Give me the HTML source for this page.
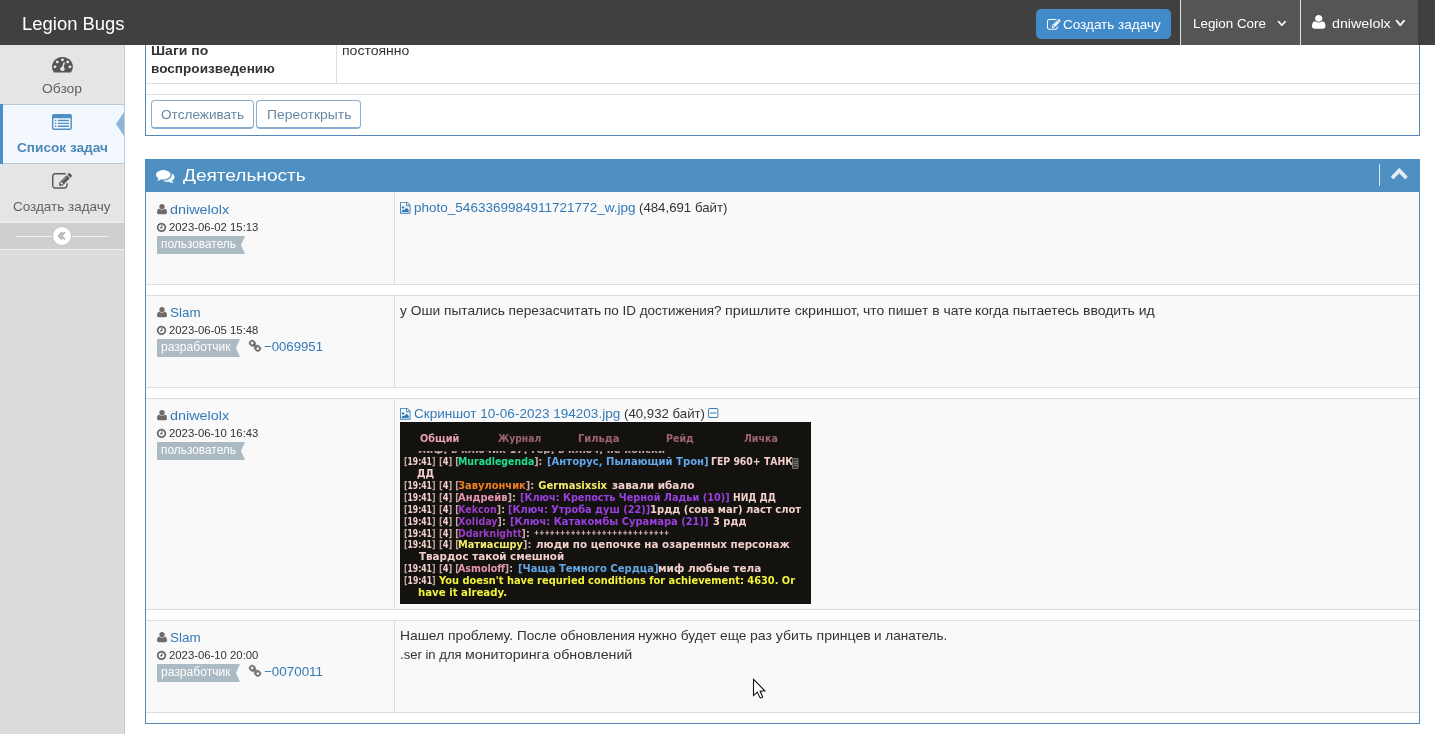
<!DOCTYPE html>
<html lang="ru">
<head>
<meta charset="utf-8">
<title>Legion Bugs</title>
<style>
*{box-sizing:border-box;margin:0;padding:0}
html,body{width:1435px;height:734px;overflow:hidden;background:#fff}
body{font-family:"Liberation Sans",sans-serif;font-size:13px;color:#393939;position:relative}
.abs{position:absolute}
.t{position:absolute;white-space:nowrap;line-height:1;z-index:5;transform-origin:0 0}
.t.c{font-family:"DejaVu Sans","Liberation Sans",sans-serif;z-index:7}
svg{position:absolute;overflow:visible;z-index:6}
/* navbar */
#nav{position:absolute;left:0;top:0;width:1435px;height:45px;background:#404040;z-index:4}
#nav .sec{position:absolute;top:0;height:45px;background:#555;border-left:1px solid #e1e1e1}
/* sidebar */
#side{position:absolute;left:0;top:45px;width:125px;height:689px;background:#dcdcdc;border-right:1px solid #c3ccd4}
.sline{position:absolute;left:0;width:124px;height:1px}
/* widgets */
.wbox{position:absolute;left:145px;width:1275px;border:1px solid #5588b8;background:#fff}
.hdr{position:absolute;left:145px;top:159px;width:1275px;height:33px;background:#4f90c2}
.row{position:absolute;left:146px;width:1273px;background:#f9f9f9;border-top:1px solid #ddd;border-bottom:1px solid #ddd}
.row .sep{position:absolute;left:248px;top:0;bottom:0;width:1px;background:#ddd}
.btn{position:absolute;height:29px;top:100px;border:1px solid #8aafce;border-bottom-width:2px;border-radius:4px;background:#fff}
.lab{position:absolute;height:18px;background:#abbac3}
.lab:after{content:"";position:absolute;right:-4px;top:0;border-style:solid;border-width:9px 4px 9px 0;border-color:#abbac3 transparent #abbac3 transparent;width:0;height:0}
#tx{position:absolute;left:0;top:0;width:1435px;height:734px;z-index:7;will-change:transform}
#shot{position:absolute;left:400px;top:422px;width:411px;height:182px;background:#13120f;z-index:6}
</style>
</head>
<body>
<!-- NAVBAR -->
<div id="nav">
  <div class="abs" style="left:1036px;top:9px;width:135px;height:30px;background:#428bca;border-radius:5px"></div>
  <div class="sec" style="left:1180px;width:120px"></div>
  <div class="sec" style="left:1300px;width:118px"></div>
</div>

<!-- SIDEBAR -->
<div id="side">
  <div class="abs" style="left:0;top:0;width:124px;height:177px;background:#e5e5e5"></div>
  <div class="sline" style="top:59px;background:#c3cfda"></div>
  <div class="abs" style="left:0;top:59px;width:124px;height:60px;background:#f2f8fd;border-top:1px solid #b5c9db;border-bottom:1px solid #b5c9db"></div>
  <div class="abs" style="left:0;top:59px;width:3px;height:60px;background:#4b8fc8"></div>
  <div class="abs" style="left:116px;top:67px;width:0;height:0;border-style:solid;border-width:12px 8px 12px 0;border-color:transparent #8fb4d4 transparent transparent"></div>
  <div class="abs" style="left:0;top:177px;width:124px;height:28px;background:#cfcfcf;border-top:1px solid #f0f0f0;border-bottom:1px solid #f0f0f0"></div>
  <div class="abs" style="left:15px;top:191px;width:94px;height:1px;background:#ececec"></div>
  <div class="abs" style="left:52px;top:181px;width:20px;height:20px;border-radius:50%;background:#fff;border:1px solid #c0c0c0"></div>
</div>

<!-- TOP WIDGET (cut) -->
<div class="wbox" style="top:30px;height:106px"></div>
<div class="abs" style="left:146px;top:83px;width:1273px;height:1px;background:#ddd"></div>
<div class="abs" style="left:146px;top:94px;width:1273px;height:1px;background:#ddd"></div>
<div class="abs" style="left:336px;top:45px;width:1px;height:38px;background:#ddd"></div>
<div class="btn" style="left:151px;width:103px"></div>
<div class="btn" style="left:256px;width:105px"></div>

<!-- ACTIVITY WIDGET -->
<div class="wbox" style="top:159px;height:565px"></div>
<div class="hdr"></div>
<div class="abs" style="left:1379px;top:164px;width:1px;height:22px;background:#d9e6f1"></div>

<div class="row" style="top:192px;height:93px;border-top:0"><div class="sep"></div></div>
<div class="row" style="top:295px;height:93px"><div class="sep"></div></div>
<div class="row" style="top:398px;height:212px"><div class="sep"></div></div>
<div class="row" style="top:620px;height:93px"><div class="sep"></div></div>

<div class="lab" style="left:157px;top:236px;width:84px"></div>
<div class="lab" style="left:157px;top:339px;width:78.5px"></div>
<div class="lab" style="left:157px;top:442px;width:84px"></div>
<div class="lab" style="left:157px;top:664px;width:78.5px"></div>

<div id="shot"></div>
<svg style="left:791px;top:458px;z-index:8" width="8" height="11" viewBox="0 0 8 11"><path d="M1.5 0.5h5.500v10h-5.500z M2.500 3.500h4 M2.500 5.500h4 M2.500 7.500h4" fill="#3a3936" stroke="#77736e" stroke-width="1"/></svg>
<svg style="left:750px;top:676px;z-index:9" width="20" height="26" viewBox="750 676 20 26"><path d="M753.500 679.300V695.600L757.300 692.100L759.900 697.500Q760.900 698.200 762 697.500L762.600 696.700L760.100 691.300L764.900 690.900Z" fill="#fff" stroke="#111" stroke-width="1.100" stroke-linejoin="miter"/></svg>
<svg style="left:51.6px;top:56.8px" width="20.9" height="15.4" viewBox="0.0 256.0 1792.0 1408.0" preserveAspectRatio="none"><path fill="#555" d="M384 1152q0-53-37.500-90.500t-90.500-37.500-90.500 37.500-37.500 90.500 37.500 90.500 90.500 37.500 90.500-37.500 37.500-90.500zm192-448q0-53-37.500-90.500t-90.500-37.500-90.500 37.500-37.500 90.500 37.500 90.500 90.500 37.500 90.500-37.500 37.500-90.500zm428 481l101-382q6-26-7.500-48.500t-38.500-29.500-48 6.500-30 39.500l-101 382q-60 5-107 43.500t-63 98.500q-20 77 20 146t117 89 146-20 89-117q16-60-6-117t-72-91zm660-33q0-53-37.500-90.500t-90.500-37.500-90.500 37.500-37.500 90.500 37.500 90.500 90.500 37.500 90.500-37.500 37.500-90.500zm-640-640q0-53-37.500-90.500t-90.500-37.500-90.500 37.500-37.500 90.500 37.500 90.500 90.500 37.500 90.500-37.500 37.500-90.500zm448 192q0-53-37.500-90.500t-90.500-37.500-90.500 37.500-37.500 90.500 37.500 90.500 90.500 37.500 90.500-37.500 37.500-90.500zm320 448q0 261-141 483-19 29-54 29h-1402q-35 0-54-29-141-221-141-483 0-182 71-348t191-286 286-191 348-71 348 71 286 191 191 286 71 348z"/></svg>
<svg style="left:52.1px;top:114.0px" width="19.9" height="15.9" viewBox="0.0 128.0 1792.0 1408.0" preserveAspectRatio="none"><path fill="#4f8fc5" d="M384 1184v64q0 13-9.500 22.500t-22.500 9.500h-64q-13 0-22.500-9.500t-9.500-22.500v-64q0-13 9.500-22.500t22.500-9.500h64q13 0 22.500 9.500t9.500 22.500zm0-256v64q0 13-9.500 22.500t-22.500 9.500h-64q-13 0-22.500-9.500t-9.500-22.500v-64q0-13 9.500-22.500t22.500-9.500h64q13 0 22.500 9.500t9.500 22.500zm0-256v64q0 13-9.500 22.500t-22.500 9.500h-64q-13 0-22.500-9.500t-9.500-22.500v-64q0-13 9.500-22.500t22.500-9.500h64q13 0 22.500 9.500t9.500 22.500zm1152 512v64q0 13-9.500 22.500t-22.500 9.500h-960q-13 0-22.500-9.500t-9.500-22.500v-64q0-13 9.500-22.500t22.500-9.500h960q13 0 22.500 9.500t9.500 22.500zm0-256v64q0 13-9.500 22.500t-22.500 9.500h-960q-13 0-22.500-9.500t-9.500-22.500v-64q0-13 9.500-22.500t22.500-9.500h960q13 0 22.500 9.500t9.500 22.500zm0-256v64q0 13-9.500 22.500t-22.500 9.500h-960q-13 0-22.500-9.500t-9.500-22.500v-64q0-13 9.500-22.500t22.500-9.500h960q13 0 22.500 9.500t9.500 22.500zm128 704v-832q0-13-9.500-22.500t-22.500-9.500h-1472q-13 0-22.500 9.500t-9.500 22.500v832q0 13 9.500 22.500t22.500 9.500h1472q13 0 22.500-9.500t9.500-22.500zm128-1088v1088q0 66-47 113t-113 47h-1472q-66 0-113-47t-47-113v-1088q0-66 47-113t113-47h1472q66 0 113 47t47 113z"/></svg>
<svg style="left:52.0px;top:173.0px" width="19.9" height="15.7" viewBox="0.0 128.0 1784.0 1408.0" preserveAspectRatio="none"><path fill="#555" d="M888 1184l116-116-152-152-116 116v56h96v96h56zm440-720q-16-16-33 1l-350 350q-17 17-1 33t33-1l350-350q17-17 1-33zm80 594v190q0 119-84.500 203.500t-203.500 84.500h-832q-119 0-203.500-84.500t-84.500-203.500v-832q0-119 84.500-203.500t203.500-84.500h832q63 0 117 25 15 7 18 23 3 17-9 29l-49 49q-14 14-32 8-23-6-45-6h-832q-66 0-113 47t-47 113v832q0 66 47 113t113 47h832q66 0 113-47t47-113v-126q0-13 9-22l64-64q15-15 35-7t20 29zm-96-738l288 288-672 672h-288v-288zm444 132l-92 92-288-288 92-92q28-28 68-28t68 28l152 152q28 28 28 68t-28 68z"/></svg>
<svg style="left:58.3px;top:232.3px" width="7.0" height="7.7" viewBox="429.0 461.0 966.0 998.0" preserveAspectRatio="none"><path fill="#9a9a9a" stroke="#9a9a9a" stroke-width="50" stroke-linejoin="round" d="M1011 1376q0 13-10 23l-50 50q-10 10-23 10t-23-10l-466-466q-10-10-10-23t10-23l466-466q10-10 23-10t23 10l50 50q10 10 10 23t-10 23l-393 393 393 393q10 10 10 23zm384 0q0 13-10 23l-50 50q-10 10-23 10t-23-10l-466-466q-10-10-10-23t10-23l466-466q10-10 23-10t23 10l50 50q10 10 10 23t-10 23l-393 393 393 393q10 10 10 23z"/></svg>
<svg style="left:1046.7px;top:18.6px" width="13.6" height="10.7" viewBox="0.0 128.0 1784.0 1408.0" preserveAspectRatio="none"><path fill="#fff" d="M888 1184l116-116-152-152-116 116v56h96v96h56zm440-720q-16-16-33 1l-350 350q-17 17-1 33t33-1l350-350q17-17 1-33zm80 594v190q0 119-84.500 203.500t-203.500 84.500h-832q-119 0-203.500-84.500t-84.500-203.500v-832q0-119 84.500-203.500t203.500-84.500h832q63 0 117 25 15 7 18 23 3 17-9 29l-49 49q-14 14-32 8-23-6-45-6h-832q-66 0-113 47t-47 113v832q0 66 47 113t113 47h832q66 0 113-47t47-113v-126q0-13 9-22l64-64q15-15 35-7t20 29zm-96-738l288 288-672 672h-288v-288zm444 132l-92 92-288-288 92-92q28-28 68-28t68 28l152 152q28 28 28 68t-28 68z"/></svg>
<svg style="left:1278.3px;top:21.0px" width="7.7" height="5.0" viewBox="397.0 653.0 998.0 582.0" preserveAspectRatio="none"><path fill="#fff" stroke="#fff" stroke-width="80" stroke-linejoin="round" d="M1395 736q0 13-10 23l-466 466q-10 10-23 10t-23-10l-466-466q-10-10-10-23t10-23l50-50q10-10 23-10t23 10l393 393 393-393q10-10 23-10t23 10l50 50q10 10 10 23z"/></svg>
<svg style="left:1312.0px;top:15.1px" width="13.4" height="13.7" viewBox="192.0 128.0 1408.0 1536.0" preserveAspectRatio="none"><path fill="#fff" d="M1600 1405q0 120-73 189.500t-194 69.500h-874q-121 0-194-69.500t-73-189.500q0-53 3.500-103.500t14-109 26.500-108.500 43-97.500 62-81 85.500-53.500 111.500-20q9 0 42 21.500t74.500 48 108 48 133.500 21.500 133.500-21.500 108-48 74.500-48 42-21.500q61 0 111.500 20t85.500 53.500 62 81 43 97.500 26.500 108.500 14 109 3.500 103.500zm-320-893q0 159-112.500 271.500t-271.500 112.500-271.500-112.500-112.500-271.500 112.500-271.500 271.500-112.500 271.500 112.500 112.500 271.500z"/></svg>
<svg style="left:1395.6px;top:19.9px" width="8.7" height="6.1" viewBox="397.0 653.0 998.0 582.0" preserveAspectRatio="none"><path fill="#fff" stroke="#fff" stroke-width="80" stroke-linejoin="round" d="M1395 736q0 13-10 23l-466 466q-10 10-23 10t-23-10l-466-466q-10-10-10-23t10-23l50-50q10-10 23-10t23 10l393 393 393-393q10-10 23-10t23 10l50 50q10 10 10 23z"/></svg>
<svg style="left:155.6px;top:170.3px" width="18.5" height="13.0" viewBox="0.0 256.0 1792.0 1408.1" preserveAspectRatio="none"><path fill="#fff" d="M1408 768q0 139-94 257t-256.500 186.500-353.500 68.500q-86 0-176-16-124 88-278 128-36 9-86 16h-3q-11 0-20.500-8t-11.500-21q-1-3-1-6.500t.5-6.500 2-6l2.500-5 3.500-5.500 4-5 4.500-5 4-4.500q5-6 23-25t26-29.500 22.500-29 25-38.500 20.500-44q-124-72-195-177t-71-224q0-139 94-257t256.500-186.500 353.500-68.500 353.500 68.500 256.500 186.500 94 257zm384 256q0 120-71 224.500t-195 176.500q10 24 20.500 44t25 38.500 22.500 29 26 29.500 23 25q1 1 4 4.500t4.500 5 4 5 3.500 5.500l2.500 5 2 6 .5 6.500-1 6.500q-3 14-13 22t-22 7q-50-7-86-16-154-40-278-128-90 16-176 16-271 0-472-132 58 4 88 4 161 0 309-45t264-129q125-92 192-212t67-254q0-77-23-152 129 71 204 178t75 230z"/></svg>
<svg style="left:1391.4px;top:167.9px" width="16.5" height="11.2" viewBox="90.0 480.0 1612.0 1035.0" preserveAspectRatio="none"><path fill="#e3ebf3" d="M1683 1331l-166 165q-19 19-45 19t-45-19l-531-531-531 531q-19 19-45 19t-45-19l-166-165q-19-19-19-45.500t19-45.500l742-741q19-19 45-19t45 19l742 741q19 19 19 45.500t-19 45.500z"/></svg>
<svg style="left:400.4px;top:202.3px" width="10.5" height="11.7" viewBox="128.0 0.0 1536.0 1792.0" preserveAspectRatio="none"><path fill="#337ab7" d="M1596 380q28 28 48 76t20 88v1152q0 40-28 68t-68 28h-1344q-40 0-68-28t-28-68v-1600q0-40 28-68t68-28h896q40 0 88 20t76 48zm-444-244v376h376q-10-29-22-41l-313-313q-12-12-41-22zm384 1528v-1024h-416q-40 0-68-28t-28-68v-416h-768v1536h1280zm-128-448v320h-1024v-192l192-192 128 128 384-384zm-832-192q-80 0-136-56t-56-136 56-136 136-56 136 56 56 136-56 136-136 56z"/></svg>
<svg style="left:400.4px;top:408.3px" width="10.5" height="11.7" viewBox="128.0 0.0 1536.0 1792.0" preserveAspectRatio="none"><path fill="#337ab7" d="M1596 380q28 28 48 76t20 88v1152q0 40-28 68t-68 28h-1344q-40 0-68-28t-28-68v-1600q0-40 28-68t68-28h896q40 0 88 20t76 48zm-444-244v376h376q-10-29-22-41l-313-313q-12-12-41-22zm384 1528v-1024h-416q-40 0-68-28t-28-68v-416h-768v1536h1280zm-128-448v320h-1024v-192l192-192 128 128 384-384zm-832-192q-80 0-136-56t-56-136 56-136 136-56 136 56 56 136-56 136-136 56z"/></svg>
<svg style="left:707.6px;top:408.0px" width="10.4" height="10.0" viewBox="192.0 128.0 1408.0 1408.0" preserveAspectRatio="none"><path fill="#337ab7" d="M1344 800v64q0 14-9 23t-23 9h-832q-14 0-23-9t-9-23v-64q0-14 9-23t23-9h832q14 0 23 9t9 23zm128 448v-832q0-66-47-113t-113-47h-832q-66 0-113 47t-47 113v832q0 66 47 113t113 47h832q66 0 113-47t47-113zm128-832v832q0 119-84.500 203.500t-203.500 84.500h-832q-119 0-203.500-84.500t-84.500-203.500v-832q0-119 84.500-203.500t203.500-84.500h832q119 0 203.500 84.500t84.500 203.500z"/></svg>
<svg style="left:157.1px;top:204.4px" width="10.0" height="10.3" viewBox="192.0 128.0 1408.0 1536.0" preserveAspectRatio="none"><path fill="#706b68" d="M1600 1405q0 120-73 189.500t-194 69.500h-874q-121 0-194-69.500t-73-189.500q0-53 3.500-103.500t14-109 26.500-108.500 43-97.500 62-81 85.500-53.500 111.500-20q9 0 42 21.500t74.500 48 108 48 133.500 21.500 133.500-21.500 108-48 74.500-48 42-21.500q61 0 111.500 20t85.500 53.500 62 81 43 97.500 26.500 108.500 14 109 3.500 103.500zm-320-893q0 159-112.500 271.500t-271.500 112.500-271.500-112.500-112.500-271.500 112.500-271.500 271.500-112.500 271.500 112.500 112.500 271.500z"/></svg>
<svg style="left:157.1px;top:222.6px" width="9.0" height="8.8" viewBox="128.0 128.0 1536.0 1536.0" preserveAspectRatio="none"><path fill="#555" stroke="#555" stroke-width="40" stroke-linejoin="round" d="M1024 544v448q0 14-9 23t-23 9h-320q-14 0-23-9t-9-23v-64q0-14 9-23t23-9h224v-352q0-14 9-23t23-9h64q14 0 23 9t9 23zm416 352q0-148-73-273t-198-198-273-73-273 73-198 198-73 273 73 273 198 198 273 73 273-73 198-198 73-273zm224 0q0 209-103 385.500t-279.500 279.500-385.500 103-385.500-103-279.500-279.500-103-385.500 103-385.500 279.500-279.500 385.500-103 385.500 103 279.500 279.500 103 385.500z"/></svg>
<svg style="left:157.1px;top:307.4px" width="10.0" height="10.3" viewBox="192.0 128.0 1408.0 1536.0" preserveAspectRatio="none"><path fill="#706b68" d="M1600 1405q0 120-73 189.500t-194 69.500h-874q-121 0-194-69.500t-73-189.500q0-53 3.500-103.500t14-109 26.500-108.500 43-97.500 62-81 85.500-53.500 111.500-20q9 0 42 21.500t74.500 48 108 48 133.500 21.500 133.500-21.500 108-48 74.500-48 42-21.500q61 0 111.500 20t85.500 53.500 62 81 43 97.500 26.500 108.500 14 109 3.500 103.500zm-320-893q0 159-112.500 271.500t-271.500 112.500-271.500-112.500-112.500-271.500 112.500-271.500 271.500-112.500 271.500 112.500 112.500 271.500z"/></svg>
<svg style="left:157.1px;top:325.6px" width="9.0" height="8.8" viewBox="128.0 128.0 1536.0 1536.0" preserveAspectRatio="none"><path fill="#555" stroke="#555" stroke-width="40" stroke-linejoin="round" d="M1024 544v448q0 14-9 23t-23 9h-320q-14 0-23-9t-9-23v-64q0-14 9-23t23-9h224v-352q0-14 9-23t23-9h64q14 0 23 9t9 23zm416 352q0-148-73-273t-198-198-273-73-273 73-198 198-73 273 73 273 198 198 273 73 273-73 198-198 73-273zm224 0q0 209-103 385.500t-279.500 279.500-385.500 103-385.500-103-279.500-279.500-103-385.500 103-385.500 279.500-279.500 385.500-103 385.500 103 279.500 279.500 103 385.500z"/></svg>
<svg style="left:157.1px;top:410.4px" width="10.0" height="10.3" viewBox="192.0 128.0 1408.0 1536.0" preserveAspectRatio="none"><path fill="#706b68" d="M1600 1405q0 120-73 189.500t-194 69.500h-874q-121 0-194-69.500t-73-189.500q0-53 3.500-103.500t14-109 26.500-108.500 43-97.500 62-81 85.500-53.500 111.500-20q9 0 42 21.500t74.500 48 108 48 133.500 21.500 133.500-21.500 108-48 74.500-48 42-21.500q61 0 111.500 20t85.500 53.500 62 81 43 97.500 26.500 108.500 14 109 3.500 103.500zm-320-893q0 159-112.500 271.500t-271.500 112.500-271.500-112.500-112.500-271.500 112.500-271.500 271.500-112.500 271.500 112.500 112.500 271.500z"/></svg>
<svg style="left:157.1px;top:428.6px" width="9.0" height="8.8" viewBox="128.0 128.0 1536.0 1536.0" preserveAspectRatio="none"><path fill="#555" stroke="#555" stroke-width="40" stroke-linejoin="round" d="M1024 544v448q0 14-9 23t-23 9h-320q-14 0-23-9t-9-23v-64q0-14 9-23t23-9h224v-352q0-14 9-23t23-9h64q14 0 23 9t9 23zm416 352q0-148-73-273t-198-198-273-73-273 73-198 198-73 273 73 273 198 198 273 73 273-73 198-198 73-273zm224 0q0 209-103 385.500t-279.500 279.500-385.500 103-385.500-103-279.500-279.500-103-385.500 103-385.500 279.500-279.500 385.500-103 385.500 103 279.500 279.500 103 385.500z"/></svg>
<svg style="left:157.1px;top:632.4px" width="10.0" height="10.3" viewBox="192.0 128.0 1408.0 1536.0" preserveAspectRatio="none"><path fill="#706b68" d="M1600 1405q0 120-73 189.500t-194 69.500h-874q-121 0-194-69.500t-73-189.500q0-53 3.500-103.500t14-109 26.500-108.500 43-97.500 62-81 85.500-53.500 111.500-20q9 0 42 21.500t74.500 48 108 48 133.500 21.500 133.500-21.500 108-48 74.500-48 42-21.500q61 0 111.500 20t85.500 53.500 62 81 43 97.500 26.500 108.500 14 109 3.500 103.500zm-320-893q0 159-112.500 271.500t-271.500 112.500-271.500-112.500-112.500-271.500 112.500-271.500 271.500-112.500 271.500 112.500 112.500 271.500z"/></svg>
<svg style="left:157.1px;top:650.6px" width="9.0" height="8.8" viewBox="128.0 128.0 1536.0 1536.0" preserveAspectRatio="none"><path fill="#555" stroke="#555" stroke-width="40" stroke-linejoin="round" d="M1024 544v448q0 14-9 23t-23 9h-320q-14 0-23-9t-9-23v-64q0-14 9-23t23-9h224v-352q0-14 9-23t23-9h64q14 0 23 9t9 23zm416 352q0-148-73-273t-198-198-273-73-273 73-198 198-73 273 73 273 198 198 273 73 273-73 198-198 73-273zm224 0q0 209-103 385.500t-279.500 279.500-385.500 103-385.500-103-279.500-279.500-103-385.500 103-385.500 279.500-279.500 385.500-103 385.500 103 279.500 279.500 103 385.500z"/></svg>
<svg style="left:249.0px;top:340.4px" width="12.0" height="11.5" viewBox="80.0 16.0 1632.0 1632.0" preserveAspectRatio="none"><path fill="#666" stroke="#666" stroke-width="50" stroke-linejoin="round" d="M1520 1216q0-40-28-68l-208-208q-28-28-68-28-42 0-72 32 3 3 19 18.500t21.500 21.500 15 19 13 25.500 3.500 27.500q0 40-28 68t-68 28q-15 0-27.500-3.500t-25.500-13-19-15-21.500-21.500-18.500-19q-33 31-33 73 0 40 28 68l206 207q27 27 68 27 40 0 68-26l147-146q28-28 28-67zm-703-705q0-40-28-68l-206-207q-28-28-68-28-39 0-68 27l-147 146q-28 28-28 67 0 40 28 68l208 208q27 27 68 27 42 0 72-31-3-3-19-18.500t-21.500-21.500-15-19-13-25.500-3.500-27.500q0-40 28-68t68-28q15 0 27.500 3.500t25.500 13 19 15 21.500 21.500 18.500 19q33-31 33-73zm895 705q0 120-85 203l-147 146q-83 83-203 83-121 0-204-85l-206-207q-83-83-83-203 0-123 88-209l-88-88q-86 88-208 88-120 0-204-84l-208-208q-84-84-84-204t85-203l147-146q83-83 203-83 121 0 204 85l206 207q83 83 83 203 0 123-88 209l88 88q86-88 208-88 120 0 204 84l208 208q84 84 84 204z"/></svg>
<svg style="left:249.0px;top:665.4px" width="12.0" height="11.5" viewBox="80.0 16.0 1632.0 1632.0" preserveAspectRatio="none"><path fill="#666" stroke="#666" stroke-width="50" stroke-linejoin="round" d="M1520 1216q0-40-28-68l-208-208q-28-28-68-28-42 0-72 32 3 3 19 18.500t21.500 21.500 15 19 13 25.500 3.500 27.500q0 40-28 68t-68 28q-15 0-27.500-3.500t-25.500-13-19-15-21.500-21.500-18.500-19q-33 31-33 73 0 40 28 68l206 207q27 27 68 27 40 0 68-26l147-146q28-28 28-67zm-703-705q0-40-28-68l-206-207q-28-28-68-28-39 0-68 27l-147 146q-28 28-28 67 0 40 28 68l208 208q27 27 68 27 42 0 72-31-3-3-19-18.500t-21.500-21.500-15-19-13-25.500-3.500-27.500q0-40 28-68t68-28q15 0 27.500 3.500t25.500 13 19 15 21.500 21.500 18.500 19q33-31 33-73zm895 705q0 120-85 203l-147 146q-83 83-203 83-121 0-204-85l-206-207q-83-83-83-203 0-123 88-209l-88-88q-86 88-208 88-120 0-204-84l-208-208q-84-84-84-204t85-203l147-146q83-83 203-83 121 0 204 85l206 207q83 83 83 203 0 123-88 209l88 88q86-88 208-88 120 0 204 84l208 208q84 84 84 204z"/></svg>
<div id="tx">
<div class="abs" style="left:400px;top:451.400px;width:276px;height:2.400px;overflow:hidden;z-index:7"><span class="t c" style="left:18px;top:-6.700px;font-size:10px;font-weight:bold;color:#c4a7a3;letter-spacing:0.1px">миф, в ключик 17, гер, в ключ, не конски</span></div>
<span class="t" style="left:21.7px;top:15.16px;font-size:18px;color:#fff;transform:scaleX(1.025);">Legion Bugs</span>
<span class="t" style="left:1062.9px;top:18.30px;font-size:13px;color:#fff;transform:scaleX(1.0392);">Создать задачу</span>
<span class="t" style="left:1192.6px;top:17.10px;font-size:13px;color:#fff;transform:scaleX(1.0293);">Legion Core</span>
<span class="t" style="left:1331.6px;top:17.10px;font-size:13px;color:#fff;transform:scaleX(1.0975);">dniwelolx</span>
<span class="t" style="left:42.0px;top:82.00px;font-size:13px;color:#616161;transform:scaleX(1.0653);">Обзор</span>
<span class="t" style="left:17.1px;top:140.80px;font-size:13px;color:#4b88b7;font-weight:bold;transform:scaleX(1.0478);">Список задач</span>
<span class="t" style="left:13.3px;top:200.10px;font-size:13px;color:#616161;transform:scaleX(1.0381);">Создать задачу</span>
<span class="t" style="left:151.0px;top:44.20px;font-size:13px;color:#333;font-weight:bold;transform:scaleX(1.0789);">Шаги по</span>
<span class="t" style="left:151.0px;top:62.00px;font-size:13px;color:#333;font-weight:bold;transform:scaleX(1.0447);">воспроизведению</span>
<span class="t" style="left:342.2px;top:44.20px;font-size:13px;color:#333;transform:scaleX(1.0779);">постоянно</span>
<span class="t" style="left:160.8px;top:108.00px;font-size:13px;color:#6688a6;transform:scaleX(1.0467);">Отслеживать</span>
<span class="t" style="left:266.6px;top:108.00px;font-size:13px;color:#6688a6;transform:scaleX(1.0694);">Переоткрыть</span>
<span class="t" style="left:183.1px;top:167.68px;font-size:16.8px;color:#fff;transform:scaleX(1.1358);">Деятельность</span>
<span class="t" style="left:170.0px;top:202.65px;font-size:13px;color:#337ab7;transform:scaleX(1.1069);">dniwelolx</span>
<span class="t" style="left:169.0px;top:221.69px;font-size:11px;color:#333;transform:scaleX(1.0292);">2023-06-02 15:13</span>
<span class="t" style="left:161.3px;top:237.54px;font-size:12px;color:#fff;transform:scaleX(0.9901);">пользователь</span>
<span class="t" style="left:170.0px;top:305.65px;font-size:13px;color:#337ab7;transform:scaleX(1.0329);">Slam</span>
<span class="t" style="left:169.0px;top:324.69px;font-size:11px;color:#333;transform:scaleX(1.0292);">2023-06-05 15:48</span>
<span class="t" style="left:161.3px;top:340.54px;font-size:12px;color:#fff;transform:scaleX(1.008);">разработчик</span>
<span class="t" style="left:264.1px;top:339.70px;font-size:13px;color:#337ab7;transform:scaleX(1.0137);">−0069951</span>
<span class="t" style="left:170.0px;top:408.65px;font-size:13px;color:#337ab7;transform:scaleX(1.1069);">dniwelolx</span>
<span class="t" style="left:169.0px;top:427.69px;font-size:11px;color:#333;transform:scaleX(1.0292);">2023-06-10 16:43</span>
<span class="t" style="left:161.3px;top:443.54px;font-size:12px;color:#fff;transform:scaleX(0.9901);">пользователь</span>
<span class="t" style="left:170.0px;top:630.65px;font-size:13px;color:#337ab7;transform:scaleX(1.0329);">Slam</span>
<span class="t" style="left:169.0px;top:649.69px;font-size:11px;color:#333;transform:scaleX(1.0292);">2023-06-10 20:00</span>
<span class="t" style="left:161.3px;top:665.54px;font-size:12px;color:#fff;transform:scaleX(1.008);">разработчик</span>
<span class="t" style="left:264.1px;top:664.70px;font-size:13px;color:#337ab7;transform:scaleX(1.0306);">−0070011</span>
<span class="t" style="left:414.4px;top:201.10px;font-size:13px;color:#337ab7;transform:scaleX(1.0398);">photo_5463369984911721772_w.jpg</span>
<span class="t" style="left:639.0px;top:201.10px;font-size:13px;color:#333;transform:scaleX(1.0177);">(484,691 байт)</span>
<span class="t" style="left:399.7px;top:304.00px;font-size:13px;color:#333;transform:scaleX(1.0579);">у Оши пытались перезасчитать</span>
<span class="t" style="left:604.1px;top:304.00px;font-size:13px;color:#333;transform:scaleX(1.0346);">по ID достижения?</span>
<span class="t" style="left:724.9px;top:304.00px;font-size:13px;color:#333;transform:scaleX(1.0975);">пришлите скриншот,</span>
<span class="t" style="left:862.9px;top:304.00px;font-size:13px;color:#333;transform:scaleX(1.0717);">что пишет в чате</span>
<span class="t" style="left:975.1px;top:304.00px;font-size:13px;color:#333;transform:scaleX(1.0612);">когда пытаетесь</span>
<span class="t" style="left:1082.5px;top:304.00px;font-size:13px;color:#333;transform:scaleX(1.0772);">вводить ид</span>
<span class="t" style="left:414.2px;top:407.20px;font-size:13px;color:#337ab7;transform:scaleX(1.0407);">Скриншот 10-06-2023 194203.jpg</span>
<span class="t" style="left:623.5px;top:407.20px;font-size:13px;color:#333;transform:scaleX(1.0173);">(40,932 байт)</span>
<span class="t" style="left:400.2px;top:629.30px;font-size:13px;color:#333;transform:scaleX(1.0648);">Нашел проблему.</span>
<span class="t" style="left:516.5px;top:629.30px;font-size:13px;color:#333;transform:scaleX(1.0414);">После обновления</span>
<span class="t" style="left:637.9px;top:629.30px;font-size:13px;color:#333;transform:scaleX(1.0551);">нужно будет еще</span>
<span class="t" style="left:749.6px;top:629.30px;font-size:13px;color:#333;transform:scaleX(1.0811);">раз убить принцев</span>
<span class="t" style="left:873.6px;top:629.30px;font-size:13px;color:#333;transform:scaleX(1.0399);">и ланатель.</span>
<span class="t" style="left:400.2px;top:648.00px;font-size:13px;color:#333;transform:scaleX(1.006);">.ser in для</span>
<span class="t" style="left:465.1px;top:648.00px;font-size:13px;color:#333;transform:scaleX(1.0947);">мониторинга обновлений</span>
<span class="t c" style="left:419.5px;top:433.74px;font-size:10px;color:#e79fb0;font-weight:bold;transform:scaleX(0.9713);">Общий</span>
<span class="t c" style="left:497.6px;top:433.74px;font-size:10px;color:#9f6474;font-weight:bold;transform:scaleX(0.921);">Журнал</span>
<span class="t c" style="left:578.0px;top:433.74px;font-size:10px;color:#9f6474;font-weight:bold;transform:scaleX(0.989);">Гильда</span>
<span class="t c" style="left:666.0px;top:433.74px;font-size:10px;color:#9f6474;font-weight:bold;transform:scaleX(0.9485);">Рейд</span>
<span class="t c" style="left:744.3px;top:433.74px;font-size:10px;color:#9f6474;font-weight:bold;transform:scaleX(0.9463);">Личка</span>
<span class="t c" style="left:403.5px;top:456.94px;font-size:10px;color:#c9a9a6;font-weight:bold;transform:scaleX(0.7661);">[<span style="color:#f3cfcb">19:41</span><span style="color:#c9a9a6">]</span></span>
<span class="t c" style="left:438.5px;top:456.94px;font-size:10px;color:#c9a9a6;font-weight:bold;transform:scaleX(0.8279);">[<span style="color:#f3cfcb">4</span><span style="color:#c9a9a6">] [</span></span>
<span class="t c" style="left:458.4px;top:456.94px;font-size:10px;color:#1fe08c;font-weight:bold;transform:scaleX(0.9403);">Muradlegenda<span style="color:#c9a9a6">]:</span></span>
<span class="t c" style="left:546.5px;top:456.94px;font-size:10px;color:#62a8e8;font-weight:bold;transform:scaleX(1.0046);">[Анторус, Пылающий Трон]</span>
<span class="t c" style="left:711.1px;top:456.94px;font-size:10px;color:#f3cfcb;font-weight:bold;transform:scaleX(0.9322);">ГЕР 960+ ТАНК</span>
<span class="t c" style="left:417.3px;top:468.87px;font-size:10px;color:#f3cfcb;font-weight:bold;transform:scaleX(0.96);">ДД</span>
<span class="t c" style="left:403.5px;top:480.80px;font-size:10px;color:#c9a9a6;font-weight:bold;transform:scaleX(0.7661);">[<span style="color:#f3cfcb">19:41</span><span style="color:#c9a9a6">]</span></span>
<span class="t c" style="left:438.5px;top:480.80px;font-size:10px;color:#c9a9a6;font-weight:bold;transform:scaleX(0.8279);">[<span style="color:#f3cfcb">4</span><span style="color:#c9a9a6">] [</span></span>
<span class="t c" style="left:458.4px;top:480.80px;font-size:10px;color:#f0801e;font-weight:bold;transform:scaleX(0.9905);">Завулончик<span style="color:#c9a9a6">]:</span></span>
<span class="t c" style="left:538.3px;top:480.80px;font-size:10px;color:#f5ec6a;font-weight:bold;">Germasixsix</span>
<span class="t c" style="left:612.2px;top:480.80px;font-size:10px;color:#f3cfcb;font-weight:bold;transform:scaleX(1.0511);">завали ибало</span>
<span class="t c" style="left:403.5px;top:492.73px;font-size:10px;color:#c9a9a6;font-weight:bold;transform:scaleX(0.7661);">[<span style="color:#f3cfcb">19:41</span><span style="color:#c9a9a6">]</span></span>
<span class="t c" style="left:438.5px;top:492.73px;font-size:10px;color:#c9a9a6;font-weight:bold;transform:scaleX(0.8279);">[<span style="color:#f3cfcb">4</span><span style="color:#c9a9a6">] [</span></span>
<span class="t c" style="left:458.4px;top:492.73px;font-size:10px;color:#e896b4;font-weight:bold;transform:scaleX(0.9901);">Андрейв<span style="color:#c9a9a6">]:</span></span>
<span class="t c" style="left:520.1px;top:492.73px;font-size:10px;color:#9a3fe0;font-weight:bold;transform:scaleX(0.973);">[Ключ: Крепость Черной Ладьи (10)]</span>
<span class="t c" style="left:733.2px;top:492.73px;font-size:10px;color:#f3cfcb;font-weight:bold;transform:scaleX(0.9137);">НИД ДД</span>
<span class="t c" style="left:403.5px;top:504.66px;font-size:10px;color:#c9a9a6;font-weight:bold;transform:scaleX(0.7661);">[<span style="color:#f3cfcb">19:41</span><span style="color:#c9a9a6">]</span></span>
<span class="t c" style="left:438.5px;top:504.66px;font-size:10px;color:#c9a9a6;font-weight:bold;transform:scaleX(0.8279);">[<span style="color:#f3cfcb">4</span><span style="color:#c9a9a6">] [</span></span>
<span class="t c" style="left:458.4px;top:504.66px;font-size:10px;color:#9b3cc8;font-weight:bold;transform:scaleX(0.9495);">Kekcon<span style="color:#c9a9a6">]:</span></span>
<span class="t c" style="left:508.4px;top:504.66px;font-size:10px;color:#9a3fe0;font-weight:bold;transform:scaleX(0.9799);">[Ключ: Утроба душ (22)]</span>
<span class="t c" style="left:650.1px;top:504.66px;font-size:10px;color:#f3cfcb;font-weight:bold;">1рдд (сова маг) ласт слот</span>
<span class="t c" style="left:403.5px;top:516.58px;font-size:10px;color:#c9a9a6;font-weight:bold;transform:scaleX(0.7661);">[<span style="color:#f3cfcb">19:41</span><span style="color:#c9a9a6">]</span></span>
<span class="t c" style="left:438.5px;top:516.58px;font-size:10px;color:#c9a9a6;font-weight:bold;transform:scaleX(0.8279);">[<span style="color:#f3cfcb">4</span><span style="color:#c9a9a6">] [</span></span>
<span class="t c" style="left:458.4px;top:516.58px;font-size:10px;color:#9b3cc8;font-weight:bold;transform:scaleX(0.9516);">Xoliday<span style="color:#c9a9a6">]:</span></span>
<span class="t c" style="left:510.2px;top:516.58px;font-size:10px;color:#9a3fe0;font-weight:bold;transform:scaleX(0.9893);">[Ключ: Катакомбы Сурамара (21)]</span>
<span class="t c" style="left:712.6px;top:516.58px;font-size:10px;color:#f3cfcb;font-weight:bold;transform:scaleX(0.9926);">3 рдд</span>
<span class="t c" style="left:403.5px;top:528.51px;font-size:10px;color:#c9a9a6;font-weight:bold;transform:scaleX(0.7661);">[<span style="color:#f3cfcb">19:41</span><span style="color:#c9a9a6">]</span></span>
<span class="t c" style="left:438.5px;top:528.51px;font-size:10px;color:#c9a9a6;font-weight:bold;transform:scaleX(0.8279);">[<span style="color:#f3cfcb">4</span><span style="color:#c9a9a6">] [</span></span>
<span class="t c" style="left:458.4px;top:528.51px;font-size:10px;color:#9b3cc8;font-weight:bold;transform:scaleX(0.9329);">Ddarknightt<span style="color:#c9a9a6">]:</span></span>
<span class="t c" style="left:533.8px;top:529.75px;font-size:7px;color:#f3cfcb;font-weight:bold;transform:scaleX(0.8866);">++++++++++++++++++++++++++</span>
<span class="t c" style="left:403.5px;top:540.44px;font-size:10px;color:#c9a9a6;font-weight:bold;transform:scaleX(0.7661);">[<span style="color:#f3cfcb">19:41</span><span style="color:#c9a9a6">]</span></span>
<span class="t c" style="left:438.5px;top:540.44px;font-size:10px;color:#c9a9a6;font-weight:bold;transform:scaleX(0.8279);">[<span style="color:#f3cfcb">4</span><span style="color:#c9a9a6">] [</span></span>
<span class="t c" style="left:458.4px;top:540.44px;font-size:10px;color:#f5ec6a;font-weight:bold;transform:scaleX(0.9767);">Матиасшру<span style="color:#c9a9a6">]:</span></span>
<span class="t c" style="left:535.8px;top:540.44px;font-size:10px;color:#f3cfcb;font-weight:bold;transform:scaleX(1.0345);">люди по цепочке на озаренных персонаж</span>
<span class="t c" style="left:418.7px;top:552.37px;font-size:10px;color:#f3cfcb;font-weight:bold;transform:scaleX(1.0343);">Твардос такой смешной</span>
<span class="t c" style="left:403.5px;top:564.30px;font-size:10px;color:#c9a9a6;font-weight:bold;transform:scaleX(0.7661);">[<span style="color:#f3cfcb">19:41</span><span style="color:#c9a9a6">]</span></span>
<span class="t c" style="left:438.5px;top:564.30px;font-size:10px;color:#c9a9a6;font-weight:bold;transform:scaleX(0.8279);">[<span style="color:#f3cfcb">4</span><span style="color:#c9a9a6">] [</span></span>
<span class="t c" style="left:458.4px;top:564.30px;font-size:10px;color:#e896b4;font-weight:bold;transform:scaleX(0.949);">Asmoloff<span style="color:#c9a9a6">]:</span></span>
<span class="t c" style="left:517.5px;top:564.30px;font-size:10px;color:#62a8e8;font-weight:bold;transform:scaleX(1.0057);">[Чаща Темного Сердца]</span>
<span class="t c" style="left:657.5px;top:564.30px;font-size:10px;color:#f3cfcb;font-weight:bold;transform:scaleX(1.0479);">миф любые тела</span>
<span class="t c" style="left:403.5px;top:576.23px;font-size:10px;color:#c9a9a6;font-weight:bold;transform:scaleX(0.771);">[<span style="color:#f3cfcb">19:41</span><span style="color:#c9a9a6">]</span></span>
<span class="t c" style="left:439.2px;top:576.23px;font-size:10px;color:#f2f23a;font-weight:bold;transform:scaleX(0.9847);">You doesn't have requried conditions for achievement: 4630. Or</span>
<span class="t c" style="left:418.4px;top:588.16px;font-size:10px;color:#f2f23a;font-weight:bold;transform:scaleX(1.0177);">have it already.</span>
</div>
</body>
</html>
